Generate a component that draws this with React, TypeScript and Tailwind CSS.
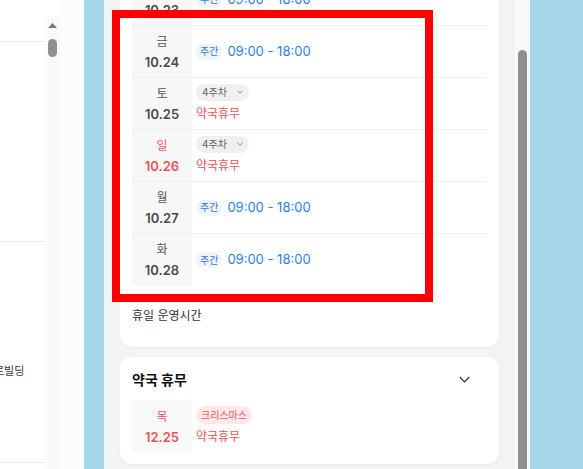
import React from "react";

type Day = {
  day: string;
  date: string;
  off?: boolean;
  red?: boolean;
};

const days: Day[] = [
  { day: "목", date: "10.23" },
  { day: "금", date: "10.24" },
  { day: "토", date: "10.25", off: true },
  { day: "일", date: "10.26", off: true, red: true },
  { day: "월", date: "10.27" },
  { day: "화", date: "10.28" },
];

function SmallChevron() {
  return (
    <svg width="6" height="4" viewBox="0 0 6 4" fill="none">
      <path d="M0.5 0.8 L3 3.2 L5.5 0.8" stroke="#8a8a8a" strokeWidth="1" />
    </svg>
  );
}

function DayRow({ d, last }: { d: Day; last: boolean }) {
  return (
    <div className={`flex h-[52px] ${last ? "" : "border-b border-[#f0f0f0]"}`}>
      <div className="flex w-[60px] shrink-0 flex-col items-center justify-center bg-[#f7f7f7] leading-[20px]">
        <span className={`text-[12px] ${d.red ? "text-[#f0525a]" : "text-[#555555]"}`}>{d.day}</span>
        <span className={`text-[13px] font-semibold ${d.red ? "text-[#f0525a]" : "text-[#4a4a4a]"}`}>{d.date}</span>
      </div>
      {d.off ? (
        <div className="flex flex-col justify-center gap-[3px] pl-1">
          <span className="flex h-[17px] w-fit items-center gap-[10px] rounded-full bg-[#f0f0f0] pl-[6px] pr-[6px] text-[10px] text-[#666666]">
            4주차
            <SmallChevron />
          </span>
          <span className="text-[12px] leading-[20px] text-[#f5515b]">약국휴무</span>
        </div>
      ) : (
        <div className="flex items-center gap-[5px] pl-1">
          <span className="flex h-[16px] items-center rounded-full bg-[#f1f3f6] px-1 text-[10px] text-[#2a7ef0]">
            주간
          </span>
          <span className="text-[13px] text-[#2a7ef0]">09:00 - 18:00</span>
        </div>
      )}
    </div>
  );
}

export default function App() {
  return (
    <div className="relative flex h-[469px] w-[583px] overflow-hidden bg-[#a5d5e9] font-['Inter','Noto_Sans_CJK_KR',sans-serif]">
      {/* left list panel */}
      <div className="flex w-[60px] shrink-0">
        <div className="flex w-[45px] flex-col overflow-hidden bg-white">
          <div className="h-[42px] shrink-0 border-b border-[#ececec]" />
          <div className="h-[200px] shrink-0 border-b border-[#ececec]" />
          <div className="flex h-[221px] shrink-0 flex-col border-b border-[#ececec]">
            <div className="mt-[119px] -ml-[6px] whitespace-nowrap text-[11px] leading-[20px] text-[#333333]">
              로빌딩
            </div>
          </div>
        </div>
        <div className="flex w-[15px] flex-col items-center bg-white">
          <div className="flex w-full flex-1 flex-col items-center bg-[#fafafa] pt-[6px] mt-[17px]">
            <svg width="9" height="5" viewBox="0 0 9 5">
              <path d="M4.5 0 L9 5 L0 5 Z" fill="#7a7a7a" />
            </svg>
            <div className="mt-[11px] h-[18px] w-[9px] rounded-full bg-[#8f8f8f]" />
          </div>
        </div>
      </div>
      <div className="w-[24px] shrink-0 bg-[#fcfcfc]" />
      <div className="w-[20px] shrink-0" />

      {/* schedule panel */}
      <div className="flex w-[411px] shrink-0 flex-col bg-[#f3f3f3] px-4">
        <div className="-mt-[39px] rounded-[12px] bg-white px-3 pt-[13px] pb-[21px] shadow-[0_1px_2px_rgba(0,0,0,0.04)]">
          {days.map((d, i) => (
            <DayRow key={d.date} d={d} last={i === days.length - 1} />
          ))}
          <div className="mt-[20px] text-[12px] leading-[20px] text-[#333333]">휴일 운영시간</div>
        </div>

        <div className="mt-[10px] rounded-[12px] bg-white px-3 pt-[12px] pb-[12px] shadow-[0_1px_2px_rgba(0,0,0,0.04)]">
          <div className="flex h-[20px] items-center justify-between">
            <span className="text-[14px] font-bold text-[#111111]">약국 휴무</span>
            <svg className="mr-[17px]" width="11" height="7" viewBox="0 0 11 7" fill="none">
              <path d="M0.8 1 L5.5 5.8 L10.2 1" stroke="#333333" strokeWidth="1.2" />
            </svg>
          </div>
          <div className="mt-[12px] flex h-[51px]">
            <div className="flex w-[60px] shrink-0 flex-col items-center justify-center bg-[#f9f9f9] leading-[20px]">
              <span className="text-[12px] text-[#f0525a]">목</span>
              <span className="text-[13px] font-semibold text-[#f0525a]">12.25</span>
            </div>
            <div className="flex flex-col justify-center gap-[3px] pl-1">
              <span className="flex h-[18px] w-fit items-center rounded-full bg-[#ffe8ea] px-[5px] text-[10px] text-[#f25a62]">
                크리스마스
              </span>
              <span className="text-[12px] leading-[20px] text-[#f5515b]">약국휴무</span>
            </div>
          </div>
        </div>
      </div>

      {/* scrollbar */}
      <div className="flex w-[15px] shrink-0 justify-center bg-[#fafafa] pt-[50px]">
        <div className="h-[500px] w-[9px] rounded-full bg-[#8f8f8f]" />
      </div>

      {/* highlight annotation */}
      <div className="absolute left-[112px] top-[10px] h-[292px] w-[321px] border-[8px] border-[#ff0000]" />
    </div>
  );
}
